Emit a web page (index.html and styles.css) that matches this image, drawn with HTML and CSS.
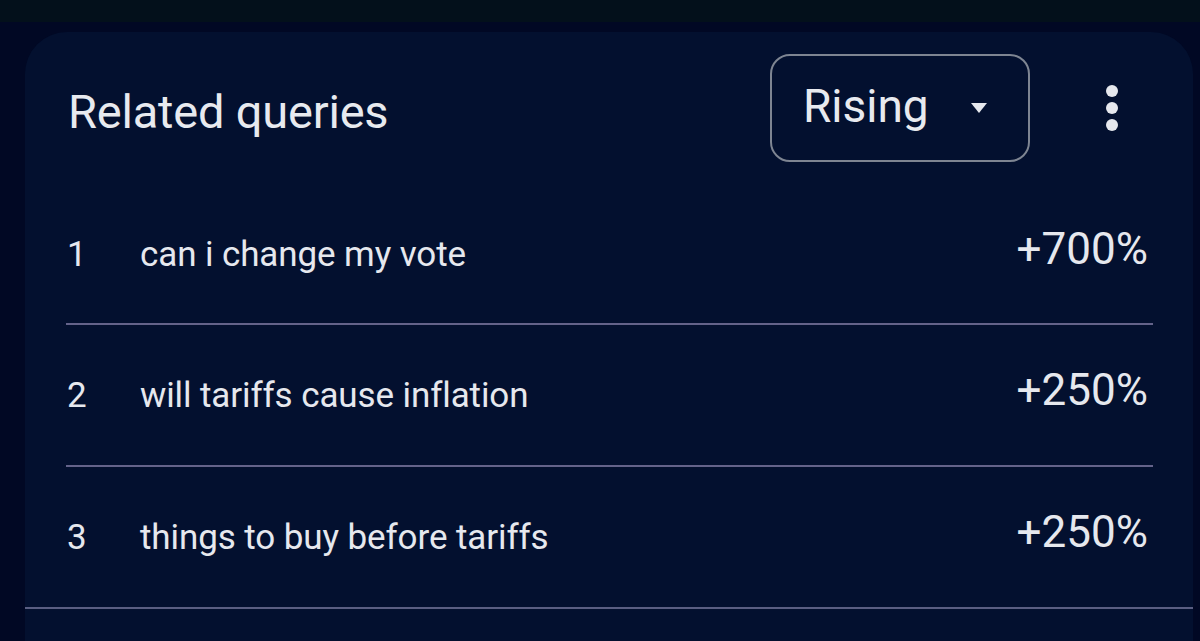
FILE: index.html
```html
<!DOCTYPE html>
<html lang="en">
<head>
<meta charset="utf-8">
<title>Related queries</title>
<link rel="stylesheet" href="styles.css">
</head>
<body>
<div class="topbar"></div>
<div class="stage">
  <section class="card">
    <header class="card-header">
      <h2 class="title">Related queries</h2>
      <button class="select" type="button">
        <span class="select-label">Rising</span>
        <svg class="caret" width="16" height="10" viewBox="0 0 16 10"><path d="M0 0 L16 0 L8 10 Z" fill="#e6e8ee"/></svg>
      </button>
      <button class="kebab" type="button" aria-label="More">
        <span class="dot"></span><span class="dot"></span><span class="dot"></span>
      </button>
    </header>
    <ol class="list">
      <li class="row"><span class="num">1</span><span class="query">can i change my vote</span><span class="value">+700%</span></li>
      <li class="row"><span class="num">2</span><span class="query">will tariffs cause inflation</span><span class="value">+250%</span></li>
      <li class="row row-last"><span class="num">3</span><span class="query">things to buy before tariffs</span><span class="value">+250%</span></li>
    </ol>
  </section>
</div>
</body>
</html>
```

FILE: styles.css
```css
html, body {
  margin: 0;
  padding: 0;
  height: 100%;
}
body {
  background: #010824;
  font-family: Roboto, "Liberation Sans", sans-serif;
  color: #e6e8ee;
  display: flex;
  flex-direction: column;
  overflow: hidden;
}
.topbar {
  height: 22px;
  background: #03101b;
  flex: none;
}
.stage {
  flex: 1;
  display: flex;
  padding: 10px 7px 0 25px;
}
.card {
  flex: 1;
  background: #03102f;
  border-radius: 42px 42px 0 0;
  display: flex;
  flex-direction: column;
}
.card-header {
  display: flex;
  align-items: center;
  padding: 22px 0 0 43px;
  height: 108px;
}
.title {
  margin: 0;
  font-weight: 400;
  font-size: 47px;
  letter-spacing: -0.2px;
  color: #e8eaef;
  padding-top: 6px;
}
.select {
  margin-left: auto;
  width: 260px;
  height: 108px;
  box-sizing: border-box;
  border: 2px solid #7e8592;
  border-radius: 20px;
  background: transparent;
  color: #e8eaef;
  font-family: inherit;
  display: flex;
  align-items: center;
  padding: 0 0 0 31px;
  cursor: pointer;
}
.select-label {
  font-size: 46px;
  font-weight: 400;
  margin-top: -4px;
}
.caret {
  margin-left: 42px;
  margin-top: 0;
}
.kebab {
  width: 40px;
  margin-left: 62px;
  margin-right: 61px;
  background: transparent;
  border: 0;
  display: flex;
  flex-direction: column;
  align-items: center;
  gap: 5px;
  padding: 0;
}
.dot {
  width: 12px;
  height: 12px;
  border-radius: 50%;
  background: #e6e8ee;
}
.list {
  list-style: none;
  margin: 23px 40px 0 41px;
  padding: 0;
}
.row {
  display: flex;
  align-items: center;
  height: 140px;
  border-bottom: 2px solid #64638a;
  font-size: 35px;
}
.row:first-child {
  height: 138px;
}
.row-last {
  margin: 0 -40px 0 -41px;
  padding: 0 40px 0 41px;
  border-bottom-color: #5a5e82;
}
.num {
  width: 74px;
  padding-left: 1px;
  box-sizing: border-box;
  font-size: 35px;
}
.query {
  flex: 1;
  letter-spacing: -0.1px;
}
.value {
  font-size: 44px;
  padding-right: 5px;
  margin-top: -10px;
}
```
